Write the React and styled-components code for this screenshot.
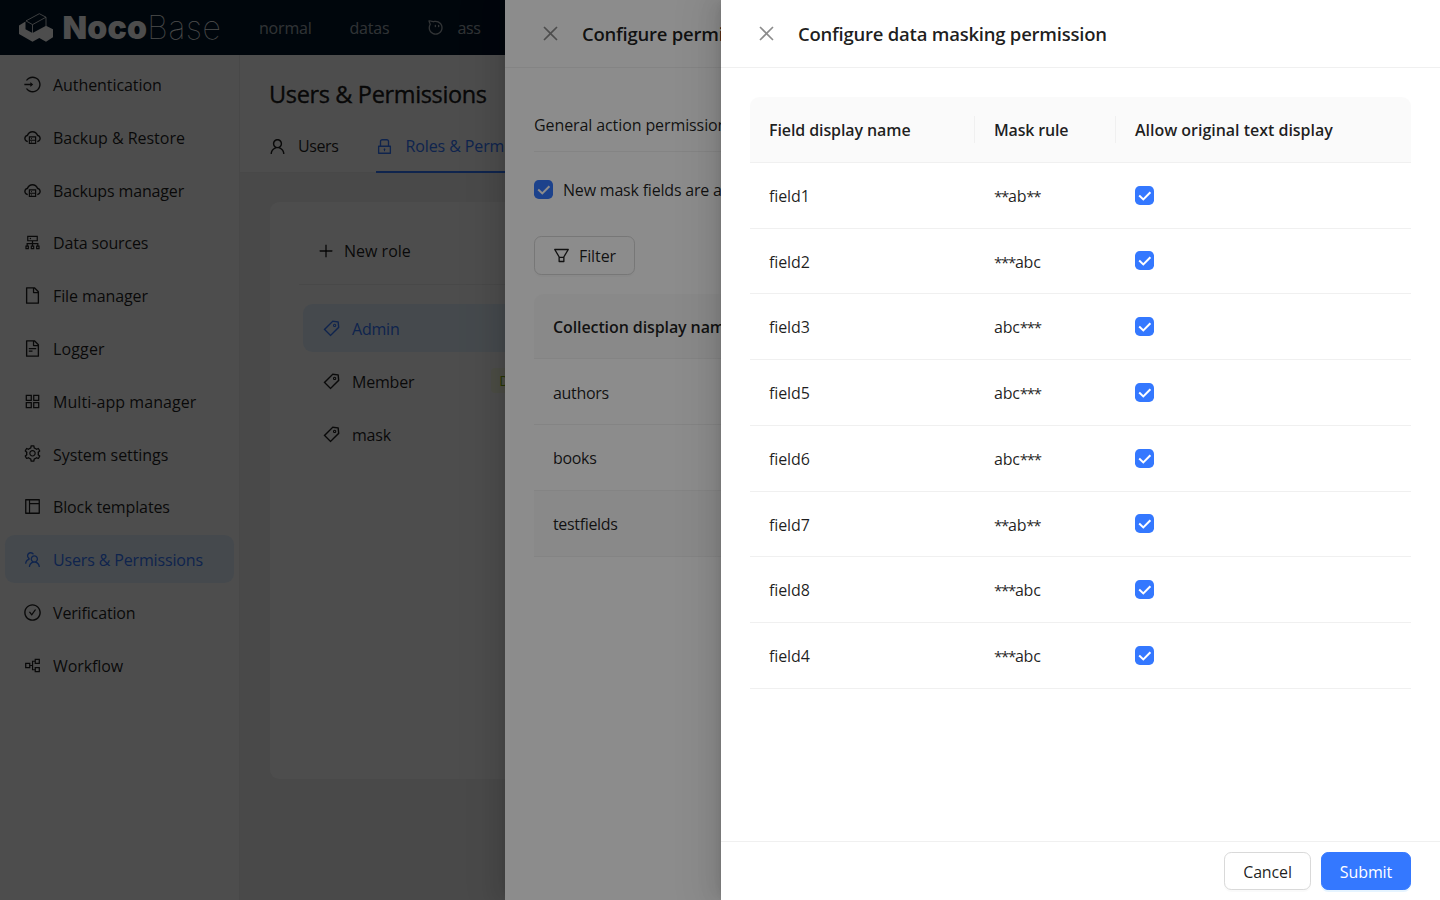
import React from 'react';
import styled, { createGlobalStyle, css } from 'styled-components';
import {
  AiOutlineLogin, AiOutlineCloudServer, AiOutlineCluster, AiOutlineFile, AiOutlineFileText,
  AiOutlineAppstore, AiOutlineSetting, AiOutlineLayout, AiOutlineTeam, AiOutlineCheckCircle,
  AiOutlinePartition, AiOutlineUser, AiOutlineLock, AiOutlineAliwangwang, AiOutlineTag,
  AiOutlineFilter, AiOutlineClose, AiOutlinePlus,
} from 'react-icons/ai';

const GlobalStyle = createGlobalStyle`
  *, *::before, *::after { box-sizing: border-box; }
  body {
    margin: 0;
    overflow: hidden;
    font-family: "Open Sans", "Noto Sans", sans-serif;
    font-size: 16px;
    line-height: 26px;
    color: rgba(0, 0, 0, 0.88);
  }
`;

const Screen = styled.div`
  position: relative;
  width: 1440px;
  height: 900px;
  overflow: hidden;
  background: #f5f5f5;
`;

const Label = styled.span`
  padding-top: ${(p) => p.$drop ?? 1.4}px;
  white-space: nowrap;
  letter-spacing: ${(p) => p.$track ?? -0.1}px;
`;

const Stars = styled.span`
  font-size: 15px;
  letter-spacing: -1.3px;
`;

const Icon = styled.span`
  display: inline-flex;
  flex: none;
  margin: -1px;
  font-size: ${(p) => p.$size ?? 19}px;
`;

/* ---------- top bar ---------- */

const TopBar = styled.header`
  display: flex;
  align-items: center;
  height: 55px;
  padding-left: 19px;
  background: #001529;
  color: rgba(255, 255, 255, 0.65);
`;

const Logo = styled.div`
  display: flex;
  align-items: center;
  width: 240px;
  color: #fff;
`;

const LogoText = styled.span`
  margin-left: 8.5px;
  font-family: Inter, sans-serif;
  font-size: 32px;
  font-weight: 900;
  line-height: 55px;
  letter-spacing: ${(p) => p.$track ?? 0}px;
  ${(p) => p.$thin && css`
    margin-left: 0;
    font-weight: 100;
  `}
`;

const NavItem = styled.div`
  display: flex;
  align-items: center;
  gap: 13px;
  margin-right: 38px;
`;

/* ---------- body ---------- */

const Body = styled.div`
  display: flex;
  height: 845px;
`;

const Sidebar = styled.nav`
  display: flex;
  flex-direction: column;
  gap: 4.8px;
  width: 240px;
  padding: 5px 5px 0;
  background: #fff;
  border-right: 1px solid #f0f0f0;
`;

const MenuItem = styled.div`
  display: flex;
  align-items: center;
  gap: ${(p) => p.$gap ?? 12}px;
  height: 48px;
  flex: none;
  padding-left: ${(p) => p.$pad ?? 19}px;
  border-radius: 9.6px;
  ${(p) => p.$active && css`
    background: #e6f4ff;
    color: #3478ff;
  `}

  ${Icon} {
    margin-top: -0.2px;
  }
`;

const Main = styled.main`
  flex: 1;
`;

const PageHeader = styled.div`
  height: 118px;
  padding: 23px 29px 0;
  background: #fff;
  border-bottom: 1px solid #f0f0f0;
`;

const PageTitle = styled.h1`
  margin: 0;
  font-size: 23.5px;
  font-weight: 400;
  line-height: 32px;
  letter-spacing: -0.35px;
  -webkit-text-stroke: 0.4px currentColor;
`;

const Tabs = styled.div`
  display: flex;
  gap: 38px;
  margin-top: 9px;
`;

const Tab = styled.div`
  display: flex;
  align-items: center;
  gap: 12px;
  height: 54px;
  ${(p) => p.$active && css`
    color: #3478ff;
    border-bottom: 2px solid #3478ff;
    padding-top: 2px;
  `}
`;

const Card = styled.section`
  width: 700px;
  height: 577px;
  margin: 29px 0 0 30px;
  padding-left: 29px;
  border-radius: 9.6px;
  background: #fff;
`;

const NewRole = styled.div`
  display: flex;
  align-items: center;
  gap: 10px;
  height: 83px;
  padding: 15px 0 0 19px;
  border-bottom: 1px solid #f0f0f0;
`;

const Roles = styled.div`
  display: flex;
  flex-direction: column;
  gap: 4.8px;
  padding: 19px 0 0 4px;
`;

const Badge = styled.span`
  margin-left: 65px;
  padding: 1px 8px 0;
  border-radius: 4px;
  background: #fcffe6;
  color: #7cb305;
  font-size: 14px;
  line-height: 24px;
`;

/* ---------- drawers ---------- */

const Mask = styled.div`
  position: absolute;
  inset: 0;
  background: rgba(0, 0, 0, 0.45);
`;

const Drawer = styled.aside`
  position: absolute;
  top: 0;
  bottom: 0;
  left: ${(p) => p.$left}px;
  width: ${(p) => 1440 - p.$left}px;
  display: flex;
  flex-direction: column;
  background: #fff;
  box-shadow: -7px 0 19px rgba(0, 0, 0, 0.08), -4px 0 7px -5px rgba(0, 0, 0, 0.12),
    -11px 0 34px 10px rgba(0, 0, 0, 0.05);
`;

const DrawerHeader = styled.div`
  display: flex;
  align-items: center;
  height: 68px;
  padding-left: 36px;
  border-bottom: 1px solid #f0f0f0;
`;

const DrawerTitle = styled.h2`
  margin: 0 0 0 22px;
  font-size: 18.5px;
  font-weight: 600;
  white-space: nowrap;
  letter-spacing: -0.23px;
`;

const CloseIcon = styled(Icon)`
  color: rgba(0, 0, 0, 0.45);
`;

const DrawerBody = styled.div`
  flex: 1;
  padding: 29px 29px 0;
`;

const DrawerFooter = styled.div`
  display: flex;
  justify-content: flex-end;
  gap: 10px;
  height: 59px;
  padding: 10px 29px 0;
  border-top: 1px solid #f0f0f0;
`;

const Button = styled.button`
  display: flex;
  align-items: center;
  justify-content: center;
  gap: 9px;
  width: ${(p) => p.$width}px;
  height: ${(p) => p.$height ?? 38}px;
  padding: 0;
  border: 1px solid #d9d9d9;
  border-radius: 7.2px;
  background: #fff;
  box-shadow: 0 2px 0 rgba(0, 0, 0, 0.02);
  color: inherit;
  font: inherit;
  ${(p) => p.$primary && css`
    border-color: #3478ff;
    background: #3478ff;
    box-shadow: 0 2px 0 rgba(5, 145, 255, 0.1);
    color: #fff;
  `}
`;

const SectionTab = styled.div`
  display: flex;
  align-items: center;
  height: 55px;
  border-bottom: 1px solid #f0f0f0;
`;

const CheckRow = styled.div`
  display: flex;
  align-items: center;
  gap: 10px;
  height: 19px;
  margin: 28px 0 37px;
`;

const Box = styled.span`
  display: inline-flex;
  align-items: center;
  justify-content: center;
  flex: none;
  width: 19px;
  height: 19px;
  border-radius: 4.8px;
  background: #3478ff;
`;

const TableHead = styled.div`
  display: grid;
  grid-template-columns: ${(p) => p.$cols};
  align-items: center;
  height: 65.8px;
  background: #fafafa;
  border-bottom: 1px solid #f0f0f0;
  border-radius: 9.6px 9.6px 0 0;
  font-weight: 600;
`;

const HeadCell = styled.div`
  display: flex;
  align-items: center;
  height: 27px;
  padding-left: 19px;
  border-right: 1px solid ${(p) => (p.$last ? 'transparent' : '#f0f0f0')};
`;

const TableRow = styled.div`
  display: grid;
  grid-template-columns: ${(p) => p.$cols};
  align-items: center;
  height: 65.75px;
  border-bottom: 1px solid #f0f0f0;
  background: ${(p) => (p.$hover ? '#fafafa' : 'transparent')};
`;

const Cell = styled.div`
  display: flex;
  align-items: center;
  padding-left: 19px;
`;

const CollectionTable = styled.div`
  margin-top: 18.6px;
`;

const CubeLogo = () => (
  <svg width="35" height="30" viewBox="0 0 35 30">
    <path d="M0 12.5 6.5 8.6V16.3L13.5 20 27 12.7 34 16.3V24.3L27 28.7 20.3 25 13.5 28.7 0 21Z" fill="#fff" />
    <path d="M7 7.9 20.3.7 27 4.2V13M13.5 11.6 27 4.2M7 7.9 13.5 11.6V20" fill="none" stroke="#fff" strokeWidth="0.8" />
  </svg>
);

const Checkbox = () => (
  <Box>
    <svg width="19" height="19" viewBox="0 0 19 19">
      <path d="M4.2 9.6 8.3 13.4 15.4 6.2" fill="none" stroke="#fff" strokeWidth="2" />
    </svg>
  </Box>
);

const MaskRule = ({ rule }) => (
  <Label $track={-0.2} $drop={1.6}>
    {rule.split(/(\*+)/).filter(Boolean).map((part, i) => (
      part[0] === '*' ? <Stars key={i}>{part}</Stars> : part
    ))}
  </Label>
);

const menu = [
  [AiOutlineLogin, 'Authentication', -0.07],
  [AiOutlineCloudServer, 'Backup & Restore', -0.02],
  [AiOutlineCloudServer, 'Backups manager', -0.15],
  [AiOutlineCluster, 'Data sources', -0.15],
  [AiOutlineFile, 'File manager', -0.1],
  [AiOutlineFileText, 'Logger', 0.15],
  [AiOutlineAppstore, 'Multi-app manager', 0.06],
  [AiOutlineSetting, 'System settings', -0.07],
  [AiOutlineLayout, 'Block templates', -0.13],
  [AiOutlineTeam, 'Users & Permissions', -0.15],
  [AiOutlineCheckCircle, 'Verification', -0.15],
  [AiOutlinePartition, 'Workflow', -0.1],
];

const fields = [
  ['field1', '**ab**'],
  ['field2', '***abc'],
  ['field3', 'abc***'],
  ['field5', 'abc***'],
  ['field6', 'abc***'],
  ['field7', '**ab**'],
  ['field8', '***abc'],
  ['field4', '***abc'],
];

const fieldCols = '225px 141px 1fr';

export default function App() {
  return (
    <>
      <GlobalStyle />
      <Screen>
        <TopBar>
          <Logo>
            <CubeLogo />
            <LogoText $track={0.2}>Noco</LogoText>
            <LogoText $thin $track={0.7}>Base</LogoText>
          </Logo>
          <NavItem><Label $track={-0.2}>normal</Label></NavItem>
          <NavItem><Label $track={-0.2}>datas</Label></NavItem>
          <NavItem>
            <Icon><AiOutlineAliwangwang /></Icon>
            <Label $track={-0.4}>ass</Label>
          </NavItem>
        </TopBar>
        <Body>
          <Sidebar>
            {menu.map(([Glyph, text, track]) => (
              <MenuItem key={text} $active={text === 'Users & Permissions'}>
                <Icon><Glyph /></Icon>
                <Label $track={track} $drop={2.1}>{text}</Label>
              </MenuItem>
            ))}
          </Sidebar>
          <Main>
            <PageHeader>
              <PageTitle>Users &amp; Permissions</PageTitle>
              <Tabs>
                <Tab>
                  <Icon><AiOutlineUser /></Icon>
                  <Label $track={-0.4} $drop={0}>Users</Label>
                </Tab>
                <Tab $active>
                  <Icon><AiOutlineLock /></Icon>
                  <Label $drop={0}>Roles &amp; Permissions</Label>
                </Tab>
              </Tabs>
            </PageHeader>
            <Card>
              <NewRole>
                <Icon $size={18}><AiOutlinePlus /></Icon>
                <Label $track={0} $drop={0}>New role</Label>
              </NewRole>
              <Roles>
                {['Admin', 'Member', 'mask'].map((role) => (
                  <MenuItem key={role} $pad={20} $active={role === 'Admin'}>
                    <Icon><AiOutlineTag /></Icon>
                    <Label $track={-0.2} $drop={2.6}>{role}</Label>
                    {role === 'Member' && <Badge>Default</Badge>}
                  </MenuItem>
                ))}
              </Roles>
            </Card>
          </Main>
        </Body>

        <Mask />
        <Drawer $left={505}>
          <DrawerHeader>
            <CloseIcon $size={21}><AiOutlineClose /></CloseIcon>
            <DrawerTitle>Configure permissions</DrawerTitle>
          </DrawerHeader>
          <DrawerBody>
            <SectionTab><Label>General action permissions</Label></SectionTab>
            <CheckRow>
              <Checkbox />
              <Label $drop={0} $track={-0.2}>New mask fields are allowed</Label>
            </CheckRow>
            <Button $width={101} $height={39}>
              <Icon><AiOutlineFilter /></Icon>
              <Label $drop={0}>Filter</Label>
            </Button>
            <CollectionTable>
              <TableHead $cols="1fr">
                <HeadCell $last><Label $drop={2}>Collection display name</Label></HeadCell>
              </TableHead>
              {['authors', 'books', 'testfields'].map((name) => (
                <TableRow key={name} $cols="1fr" $hover={name === 'testfields'}>
                  <Cell>
                    <Label $track={-0.33} $drop={name === 'authors' ? 2.4 : 1.4}>{name}</Label>
                  </Cell>
                </TableRow>
              ))}
            </CollectionTable>
          </DrawerBody>
        </Drawer>

        <Mask />
        <Drawer $left={721}>
          <DrawerHeader>
            <CloseIcon $size={21}><AiOutlineClose /></CloseIcon>
            <DrawerTitle>Configure data masking permission</DrawerTitle>
          </DrawerHeader>
          <DrawerBody>
            <TableHead $cols={fieldCols}>
              <HeadCell><Label $track={-0.1}>Field display name</Label></HeadCell>
              <HeadCell><Label $track={-0.17}>Mask rule</Label></HeadCell>
              <HeadCell $last><Label $track={-0.02}>Allow original text display</Label></HeadCell>
            </TableHead>
            {fields.map(([name, rule]) => (
              <TableRow key={name} $cols={fieldCols}>
                <Cell><Label $drop={1.6}>{name}</Label></Cell>
                <Cell><MaskRule rule={rule} /></Cell>
                <Cell><Checkbox /></Cell>
              </TableRow>
            ))}
          </DrawerBody>
          <DrawerFooter>
            <Button $width={87}><Label $track={-0.15}>Cancel</Label></Button>
            <Button $width={90} $primary><Label $track={-0.1}>Submit</Label></Button>
          </DrawerFooter>
        </Drawer>
      </Screen>
    </>
  );
}
